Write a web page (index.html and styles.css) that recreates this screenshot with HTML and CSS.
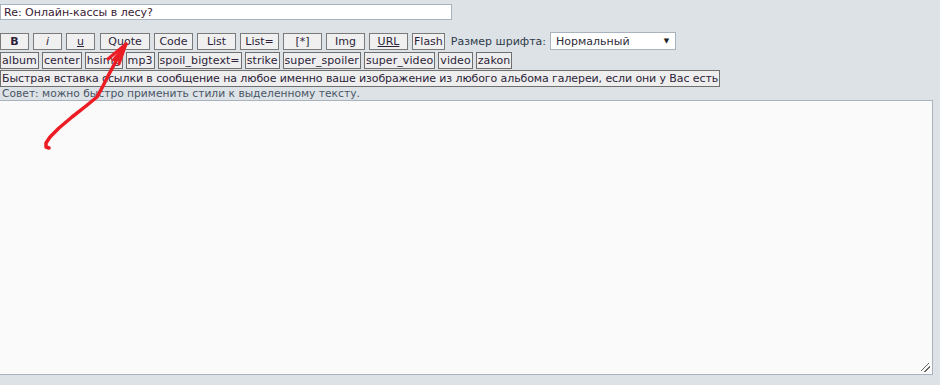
FILE: index.html
```html
<!DOCTYPE html>
<html>
<head>
<meta charset="utf-8">
<link rel="stylesheet" href="styles.css">
</head>
<body>
<div class="page">
  <div class="subject"><input class="subject-input" type="text" value="Re: Онлайн-кассы в лесу?"></div>
  <div class="row row1">
    <button class="btn narrow bold">B</button>
    <button class="btn narrow ital">i</button>
    <button class="btn narrow und">u</button>
    <button class="btn quote">Quote</button>
    <button class="btn">Code</button>
    <button class="btn">List</button>
    <button class="btn">List=</button>
    <button class="btn">[*]</button>
    <button class="btn">Img</button>
    <button class="btn und">URL</button>
    <button class="btn tight">Flash</button>
    <span class="label">Размер шрифта:</span>
    <div class="select"><span>Нормальный</span><span class="arrow">▼</span></div>
  </div>
  <div class="row row2">
    <button class="tag">album</button>
    <button class="tag">center</button>
    <button class="tag">hsimg</button>
    <button class="tag">mp3</button>
    <button class="tag">spoil_bigtext=</button>
    <button class="tag">strike</button>
    <button class="tag">super_spoiler</button>
    <button class="tag">super_video</button>
    <button class="tag">video</button>
    <button class="tag">zakon</button>
  </div>
  <div class="row row3">
    <button class="tag long">Быстрая вставка ссылки в сообщение на любое именно ваше изображение из любого альбома галереи, если они у Вас есть</button>
  </div>
  <div class="hint">Совет: можно быстро применить стили к выделенному тексту.</div>
  <div class="editor"><span class="grip"></span></div>
  <svg class="scribble" width="940" height="385" viewBox="0 0 940 385">
    <path d="M126 44 L121 52 L115 63 L108 76 L103 86 L97 97 L86 106 L72 117 L59 128 L50 137 L46 143 L46 147 L49 148" fill="none" stroke="#ec1c24" stroke-width="3.5" stroke-linecap="round" stroke-linejoin="round"/>
    <path d="M108 59 L126 44 L119 64" fill="none" stroke="#ec1c24" stroke-width="3" stroke-linecap="round" stroke-linejoin="round"/>
    <path d="M113 60 L125 46" fill="none" stroke="#ec1c24" stroke-width="2.5" stroke-linecap="round"/>
  </svg>
</div>
</body>
</html>
```
FILE: styles.css
```css
html, body {
  margin: 0;
  padding: 0;
  background: #dde2e6;
}
.page {
  position: relative;
  width: 940px;
  height: 385px;
  font-family: "DejaVu Sans", Verdana, sans-serif;
  font-size: 11px;
  color: #2d1e3a;
  overflow: hidden;
}
.subject {
  padding-top: 4px;
  height: 31px;
  box-sizing: border-box;
}
.subject-input {
  display: block;
  width: 452px;
  height: 16px;
  box-sizing: border-box;
  margin: 0;
  border: 1px solid #aab4be;
  background: #fff;
  font-family: "DejaVu Sans", Verdana, sans-serif;
  font-size: 11px;
  color: #3a1a34;
  padding: 0 3px;
}
.row {
  display: flex;
  align-items: center;
}
.row1 {
  height: 20px;
  gap: 4px;
}
.btn {
  height: 17px;
  min-width: 39px;
  box-sizing: border-box;
  margin: 0;
  padding: 0 4px;
  border: 1px solid #7a7a7a;
  background: #f0f0f0;
  font-family: "DejaVu Sans", Verdana, sans-serif;
  font-size: 11px;
  color: #2d1e3a;
  line-height: 15px;
}
.btn.narrow { min-width: 29px; width: 29px; padding: 0; }
.btn.quote { width: 50px; margin-left: 1px; }
.btn.tight { min-width: 0; padding: 0 1px; }
.bold { font-weight: bold; }
.ital { font-style: italic; }
.und { text-decoration: underline; }
.label {
  margin-left: 2px;
  color: #2e3a48;
}
.select {
  width: 126px;
  height: 18px;
  box-sizing: border-box;
  border: 1px solid #a9b3bd;
  background: #fff;
  display: flex;
  align-items: center;
  justify-content: space-between;
  padding: 0 6px 0 5px;
  color: #2d2d3a;
}
.arrow { font-size: 7px; color: #222; }
.row2 {
  gap: 3px;
  height: 18px;
}
.tag {
  height: 17px;
  box-sizing: border-box;
  margin: 0;
  padding: 0 1px;
  border: 1px solid #6f6f6f;
  background: #eeeeee;
  font-family: "DejaVu Sans", Verdana, sans-serif;
  font-size: 11px;
  color: #2d1e3a;
  line-height: 15px;
  white-space: nowrap;
  letter-spacing: 0.08px;
}
.row3 {
  height: 18px;
}
.tag.long { padding: 0 1px; letter-spacing: -0.1px; }
.hint {
  height: 13px;
  line-height: 13px;
  padding-left: 2px;
  font-size: 10.7px;
  color: #4a5666;
  width: 933px;
  box-sizing: border-box;
}
.editor {
  position: relative;
  width: 933px;
  height: 275px;
  box-sizing: border-box;
  border: 1px solid #a8b3bd;
  border-left: none;
  background: #fafafa;
}
.grip {
  position: absolute;
  right: 2px;
  bottom: 2px;
  width: 9px;
  height: 9px;
  background: linear-gradient(135deg, transparent 40%, #666 40%, #666 48%, transparent 48%, transparent 65%, #666 65%, #666 73%, transparent 73%);
}
.scribble {
  position: absolute;
  left: 0;
  top: 0;
  pointer-events: none;
}
```
